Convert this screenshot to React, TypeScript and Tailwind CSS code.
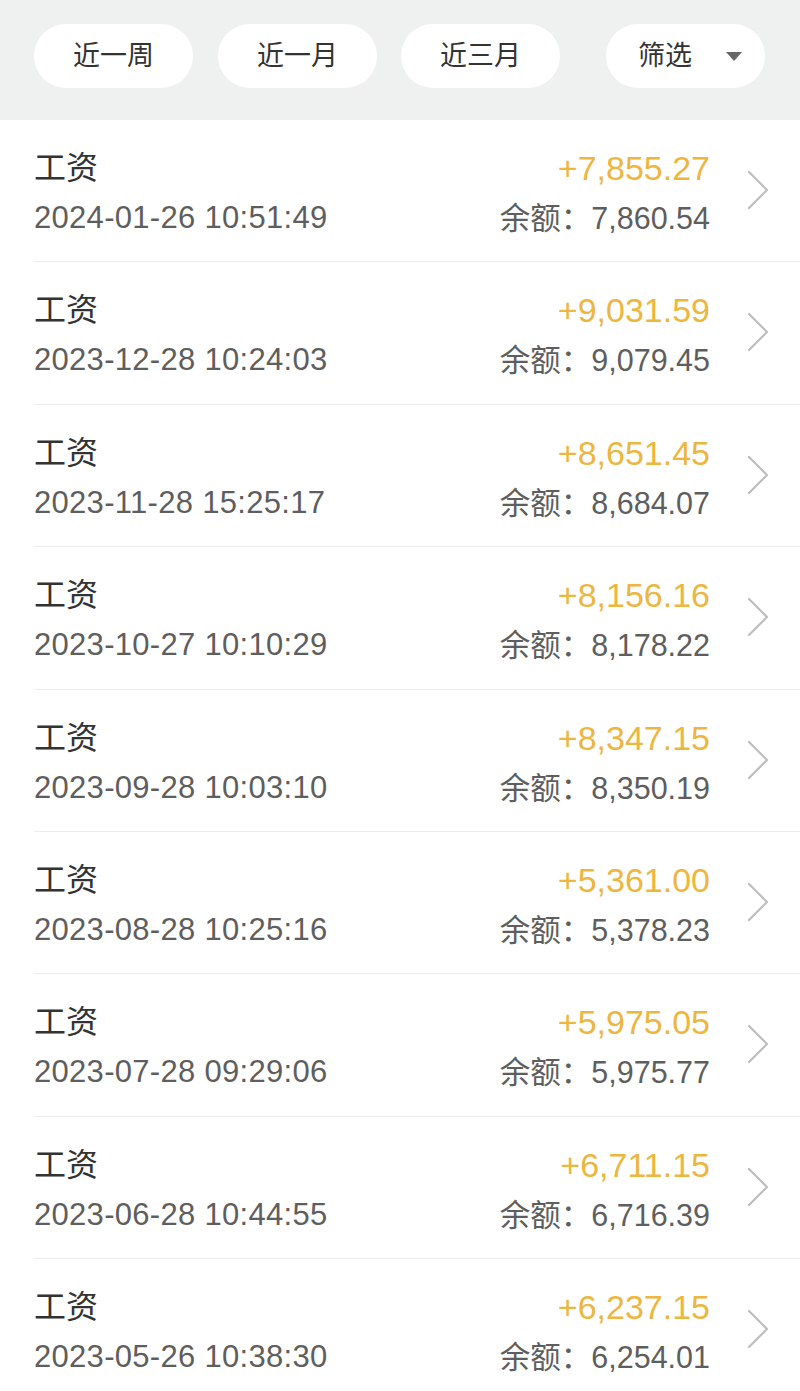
import React from "react";

const rows = [
  { date: "2024-01-26 10:51:49", amount: "+7,855.27", balance: "7,860.54" },
  { date: "2023-12-28 10:24:03", amount: "+9,031.59", balance: "9,079.45" },
  { date: "2023-11-28 15:25:17", amount: "+8,651.45", balance: "8,684.07" },
  { date: "2023-10-27 10:10:29", amount: "+8,156.16", balance: "8,178.22" },
  { date: "2023-09-28 10:03:10", amount: "+8,347.15", balance: "8,350.19" },
  { date: "2023-08-28 10:25:16", amount: "+5,361.00", balance: "5,378.23" },
  { date: "2023-07-28 09:29:06", amount: "+5,975.05", balance: "5,975.77" },
  { date: "2023-06-28 10:44:55", amount: "+6,711.15", balance: "6,716.39" },
  { date: "2023-05-26 10:38:30", amount: "+6,237.15", balance: "6,254.01" },
];

const font = "font-['Liberation_Sans','Noto_Sans_CJK_SC',sans-serif]";

function Pill({ label, className = "" }: { label: string; className?: string }) {
  return (
    <div
      className={`flex h-[64px] w-[159px] items-center justify-center rounded-full bg-white text-[27px] leading-none text-[#333] ${className}`}
    >
      {label}
    </div>
  );
}

function Chevron() {
  return (
    <svg width="24" height="40" viewBox="0 0 24 40" fill="none">
      <path d="M3 2 L21 20 L3 38" stroke="#bdbdbd" strokeWidth="2.2" strokeLinecap="round" strokeLinejoin="round" />
    </svg>
  );
}

export default function App() {
  return (
    <div className={`h-[1391px] w-[800px] overflow-hidden bg-white ${font}`}>
      <div className="flex h-[120px] items-start bg-[#eff0f0] pl-[34px] pt-[24px]">
        <Pill label="近一周" />
        <Pill label="近一月" className="ml-[25px]" />
        <Pill label="近三月" className="ml-[24px]" />
        <div className="ml-[46px] flex h-[64px] w-[159px] items-center rounded-full bg-white pl-[32px] text-[27px] leading-none text-[#333]">
          <span>筛选</span>
          <span className="ml-[34px] h-0 w-0 border-x-[8px] border-t-[9px] border-x-transparent border-t-[#666]" />
        </div>
      </div>
      <div className="pl-[34px]">
        {rows.map((r, i) => (
          <div key={i} className="flex h-[142.4px] items-start border-b border-[#ededed]">
            <div className="flex flex-1 flex-col pt-[28px]">
              <div className="text-[32px] leading-[40px] text-[#333]">工资</div>
              <div className="mt-[10px] text-[31px] leading-[40px] tracking-[0.3px] text-[#5e5e5e]">{r.date}</div>
            </div>
            <div className="flex flex-col items-end pt-[28px]">
              <div className="text-[34px] leading-[40px] text-[#ecb63f]">{r.amount}</div>
              <div className="mt-[10px] text-[30.5px] leading-[40px] text-[#5e5e5e]">
                余额：{r.balance}
              </div>
            </div>
            <div className="ml-[36px] mr-[30px] mt-[50px] flex w-[24px]">
              <Chevron />
            </div>
          </div>
        ))}
      </div>
    </div>
  );
}
